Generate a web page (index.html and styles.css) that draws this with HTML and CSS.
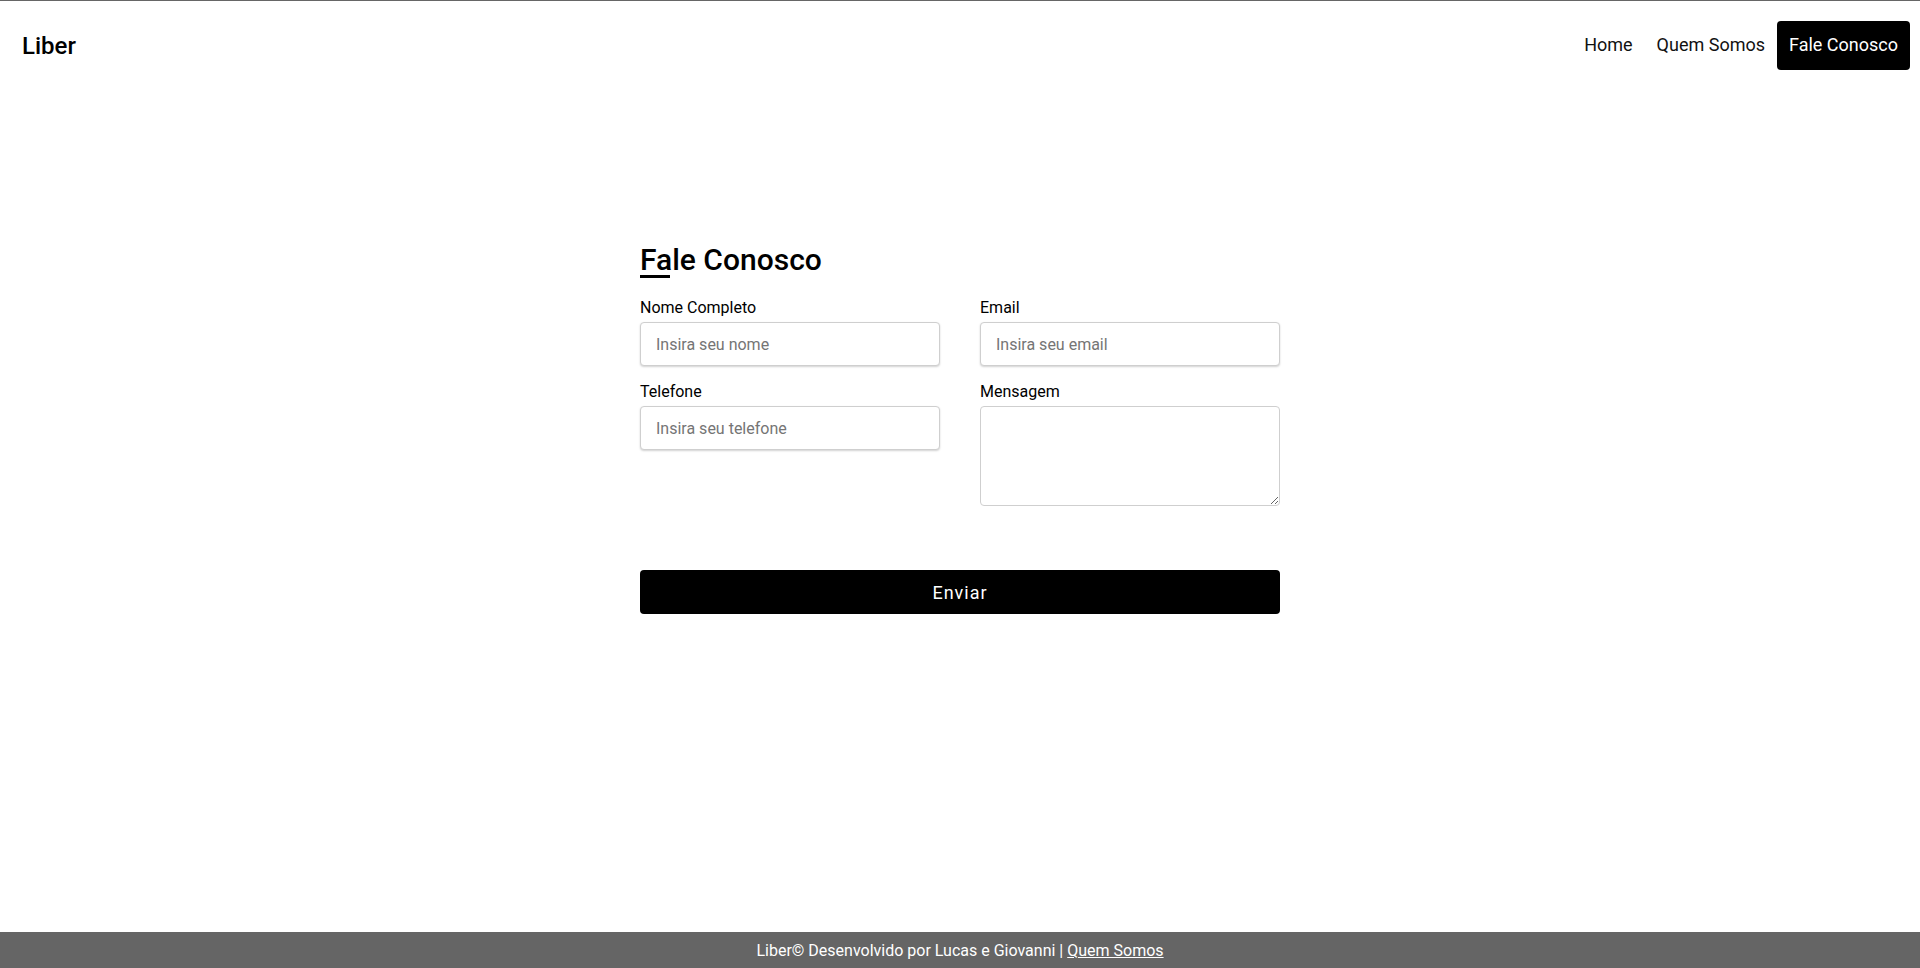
FILE: index.html
```html
<!DOCTYPE html>
<html lang="pt-BR">
<head>
<meta charset="utf-8">
<title>Liber - Fale Conosco</title>
<link rel="stylesheet" href="styles.css">
</head>
<body>
<header class="topbar">
  <a class="logo" href="#">Liber</a>
  <nav class="nav">
    <a class="nav-link" href="#">Home</a>
    <a class="nav-link" href="#">Quem Somos</a>
    <a class="nav-link active" href="#">Fale Conosco</a>
  </nav>
</header>
<main class="main">
  <form class="contact">
    <h2 class="title">Fale Conosco</h2>
    <div class="grid">
      <div class="field">
        <label class="label" for="nome">Nome Completo</label>
        <input class="input" id="nome" type="text" placeholder="Insira seu nome">
      </div>
      <div class="field">
        <label class="label" for="email">Email</label>
        <input class="input" id="email" type="email" placeholder="Insira seu email">
      </div>
      <div class="field">
        <label class="label" for="tel">Telefone</label>
        <input class="input" id="tel" type="tel" placeholder="Insira seu telefone">
      </div>
      <div class="field">
        <label class="label" for="msg">Mensagem</label>
        <textarea class="input textarea" id="msg"></textarea>
      </div>
    </div>
    <button class="submit" type="button">Enviar</button>
  </form>
</main>
<footer class="footer">
  Liber© Desenvolvido por Lucas e Giovanni | <a class="footer-link" href="#">Quem Somos</a>
</footer>
</body>
</html>
```
FILE: styles.css
```css
* { box-sizing: border-box; }
html, body { margin: 0; padding: 0; }
body {
  font-family: Roboto, "Liberation Sans", Arial, sans-serif;
  color: #000;
  background: #fff;
  min-height: 100vh;
  display: flex;
  flex-direction: column;
  border-top: 1px solid #666;
}
.topbar {
  display: flex;
  align-items: center;
  justify-content: space-between;
  padding: 20px 10px 20px 22px;
}
.logo {
  font-size: 24px;
  font-weight: 500;
  color: #000;
  text-decoration: none;
}
.nav { display: flex; align-items: center; }
.nav-link {
  font-size: 18px;
  color: #111;
  text-decoration: none;
  padding: 0 12px;
  height: 49px;
  line-height: 47px;
  border-radius: 4px;
}
.nav-link.active {
  background: #000;
  color: #fff;
  width: 133px;
}
.main {
  flex: 1;
  display: flex;
  justify-content: center;
  padding-top: 154px;
}
.contact { width: 640px; }
.title {
  margin: 0;
  font-size: 30px;
  font-weight: 500;
  line-height: 32px;
}
.title::after {
  content: "";
  display: block;
  width: 30px;
  height: 3px;
  background: #000;
  margin-top: -1px;
}
.grid {
  display: grid;
  grid-template-columns: 300px 300px;
  column-gap: 40px;
  row-gap: 16px;
  margin-top: 20px;
  align-items: start;
}
.field { display: flex; flex-direction: column; }
.label {
  font-size: 16px;
  line-height: 19px;
  margin-bottom: 5px;
}
.input {
  width: 300px;
  height: 44px;
  border: 1px solid #cfcfcf;
  border-radius: 4px;
  box-shadow: 0 1px 2px rgba(0, 0, 0, 0.18);
  padding: 0 15px;
  font-family: Roboto, "Liberation Sans", Arial, sans-serif;
  font-size: 16px;
  color: #000;
  background: #fff;
  outline: none;
}
.input::placeholder { color: #757575; }
.textarea {
  height: 100px;
  padding: 10px 15px;
  box-shadow: none;
  resize: both;
}
.submit {
  display: block;
  width: 640px;
  height: 44px;
  margin-top: 64px;
  background: #000;
  color: #fff;
  border: none;
  border-radius: 4px;
  font-family: Roboto, "Liberation Sans", Arial, sans-serif;
  font-size: 18px;
  letter-spacing: 1px;
  cursor: pointer;
}
.footer {
  height: 36px;
  line-height: 37px;
  background: #656565;
  color: #fff;
  text-align: center;
  font-size: 16px;
}
.footer-link { color: #fff; text-decoration: underline; }
```
